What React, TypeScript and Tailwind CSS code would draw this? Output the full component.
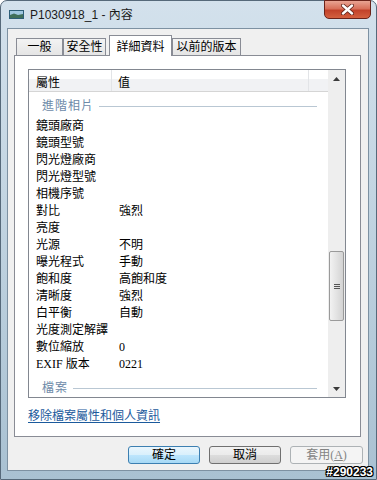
// Windows 7 style file properties dialog, "詳細資料" tab selected.
import React from "react";

const ROWS: [string, string][] = [
  ["鏡頭廠商", ""],
  ["鏡頭型號", ""],
  ["閃光燈廠商", ""],
  ["閃光燈型號", ""],
  ["相機序號", ""],
  ["對比", "強烈"],
  ["亮度", ""],
  ["光源", "不明"],
  ["曝光程式", "手動"],
  ["飽和度", "高飽和度"],
  ["清晰度", "強烈"],
  ["白平衡", "自動"],
  ["光度測定解譯", ""],
  ["數位縮放", "0"],
  ["EXIF 版本", "0221"],
];

const TABS = [
  { label: "一般", w: "w-[47px]", active: false, extra: "" },
  { label: "安全性", w: "w-[43px]", active: false, extra: "" },
  { label: "詳細資料", w: "w-[63px]", active: true, extra: "ml-[3px]" },
  { label: "以前的版本", w: "w-[69px]", active: false, extra: "" },
];

// group header inside the list view ("進階相片", "檔案")
const GroupRow: React.FC<{ label: string; className?: string }> = ({ label, className = "" }) => (
  <div className={`flex items-center h-[24px] pt-[4px] pl-[13px] pr-[11px] shrink-0 ${className}`}>
    <span className="text-[#6d8aa8] text-[12px] tracking-[1px]">{label}</span>
    <div className="flex-1 h-px bg-[#b9c7d3] ml-[5px]" />
  </div>
);

const Arrow: React.FC<{ down?: boolean }> = ({ down }) => (
  <svg width="7" height="4" viewBox="0 0 7 4" aria-hidden="true">
    <path d={down ? "M0 0h7L3.5 4z" : "M0 4h7L3.5 0z"} fill="#3a3a3a" />
  </svg>
);

export default function App() {
  return (
    <div className="relative w-[377px] h-[480px] overflow-hidden bg-white">
      <div className="flex flex-col w-[377px] h-[480px] rounded-t-[7px] border border-[#56697a] bg-[linear-gradient(#d3e1ec_0%,#c3d5e2_40%,#a9c1d2_100%)] font-['Liberation_Serif','Noto_Sans_CJK_TC',serif] text-[12px] text-black">

        {/* title bar */}
        <div className="flex items-start h-[27px] shrink-0">
          <div className="flex items-center h-[27px] pl-[8px] gap-[6px]">
            <svg width="15" height="9" viewBox="0 0 15 9" aria-hidden="true">
              <rect x="0" y="0" width="15" height="9" fill="#2d5e78" />
              <rect x="1" y="1" width="13" height="4" fill="#9fc7e0" />
              <path d="M1 5 L5 3.5 L9 5 L14 4 L14 8 L1 8z" fill="#3f6f5a" />
            </svg>
            <span className="font-['Liberation_Sans','Noto_Sans_CJK_TC',sans-serif] text-[12px] text-[#1b1b1b]">
              P1030918_1 - 內容
            </span>
          </div>
          <div className="ml-auto mr-[5px] -mt-px w-[47px] h-[19px] rounded-b-[5px] border border-[#6b231a] bg-[linear-gradient(#e9a493_0%,#d8705a_45%,#c2422a_55%,#d4603f_100%)] flex items-center justify-center">
            <svg width="13" height="11" viewBox="0 0 13 11" aria-hidden="true">
              <path d="M2 1.5 L11 9.5 M11 1.5 L2 9.5" stroke="#5b2016" strokeWidth="4" strokeLinecap="round" />
              <path d="M2 1.5 L11 9.5 M11 1.5 L2 9.5" stroke="#ffffff" strokeWidth="2.4" strokeLinecap="round" />
            </svg>
          </div>
        </div>

        {/* client area */}
        <div className="ml-[6px] w-[362px] h-[443px] border border-[#7d91a2] bg-[#f0f0f0] flex flex-col">

          {/* tabs */}
          <div className="flex items-end h-[20px] mt-[6px] pl-[8px] shrink-0">
            {TABS.map((t) =>
              t.active ? (
                <div
                  key={t.label}
                  className={`${t.w} ${t.extra} relative z-10 -mb-px h-[21px] bg-white border border-b-0 border-[#898c95] flex items-start justify-center pt-[2px]`}
                >
                  {t.label}
                </div>
              ) : (
                <div
                  key={t.label}
                  className={`${t.w} ${t.extra} h-[17px] border border-b-0 border-[#898c95] bg-[linear-gradient(#f3f3f3,#e5e5e5)] flex items-center justify-center`}
                >
                  {t.label}
                </div>
              )
            )}
          </div>

          {/* tab panel */}
          <div className="ml-[6px] w-[347px] h-[382px] border border-[#898c95] bg-white flex flex-col shrink-0">
            {/* list view */}
            <div className="mt-[13px] ml-[13px] w-[318px] h-[329px] border border-[#828790] flex">
              <div className="flex-1 flex flex-col overflow-hidden">
                <div className="flex h-[22px] shrink-0 border-b border-[#d5d5d5] bg-[linear-gradient(#ffffff_0%,#ffffff_42%,#f1f2f4_42%,#f1f2f4_100%)]">
                  <div className="w-[83px] pl-[7px] pt-[4px] flex items-center border-r border-[#e2e4e7]">屬性</div>
                  <div className="w-[197px] pl-[6px] pt-[4px] flex items-center border-r border-[#e2e4e7]">值</div>
                  <div className="flex-1" />
                </div>
                <GroupRow label="進階相片" />
                {ROWS.map(([k, v]) => (
                  <div key={k} className="flex items-center h-[17px] pt-[4px] shrink-0 leading-[13px]">
                    <div className="w-[83px] pl-[7px] whitespace-nowrap">{k}</div>
                    <div className="pl-[7px]">{v}</div>
                  </div>
                ))}
                <GroupRow label="檔案" className="mt-[3px]" />
              </div>

              {/* scrollbar */}
              <div className="w-[17px] bg-[#eeeeee] flex flex-col">
                <div className="h-[17px] flex items-center justify-center">
                  <Arrow />
                </div>
                <div className="mt-[164px] mx-px h-[70px] rounded-[2px] border border-[#9a9a9a] bg-[linear-gradient(90deg,#f2f2f2,#e0e0e0_60%,#d3d3d3)] flex flex-col items-center justify-center gap-[1px]">
                  <div className="w-[6px] h-px bg-[#555]" />
                  <div className="w-[6px] h-px bg-[#555]" />
                  <div className="w-[6px] h-px bg-[#555]" />
                </div>
                <div className="flex-1" />
                <div className="h-[17px] flex items-center justify-center">
                  <Arrow down />
                </div>
              </div>
            </div>

            <a className="mt-[11px] ml-[13px] leading-[14px] text-[#1b5a9c] underline underline-offset-2 w-fit cursor-pointer">
              移除檔案屬性和個人資訊
            </a>
          </div>

          {/* buttons */}
          <div className="flex justify-end gap-[9px] pr-[5px] mt-[9px]">
            <button className="w-[72px] h-[18px] rounded-[3px] border border-[#3c7fb1] bg-[linear-gradient(#eaf6fd_0%,#d9f0fc_50%,#bee6fd_50%,#a7d9f5_100%)] flex items-center justify-center">
              確定
            </button>
            <button className="w-[72px] h-[18px] rounded-[3px] border border-[#707070] bg-[linear-gradient(#f2f2f2_0%,#ebebeb_50%,#dddddd_50%,#cfcfcf_100%)] flex items-center justify-center">
              取消
            </button>
            <button className="w-[73px] h-[18px] rounded-[3px] border border-[#adb2b5] bg-[#f4f4f4] text-[#838383] flex items-center justify-center">
              套用(<span className="underline">A</span>)
            </button>
          </div>
        </div>
      </div>

      {/* image host watermark */}
      <span className="absolute right-[4px] bottom-[1px] font-['Liberation_Sans',sans-serif] font-bold text-[12px] leading-[13px] text-white [text-shadow:1px_0_0_#000,-1px_0_0_#000,0_1px_0_#000,0_-1px_0_#000,1px_1px_0_#000,-1px_-1px_0_#000,1px_-1px_0_#000,-1px_1px_0_#000]">
        #290233
      </span>
    </div>
  );
}
